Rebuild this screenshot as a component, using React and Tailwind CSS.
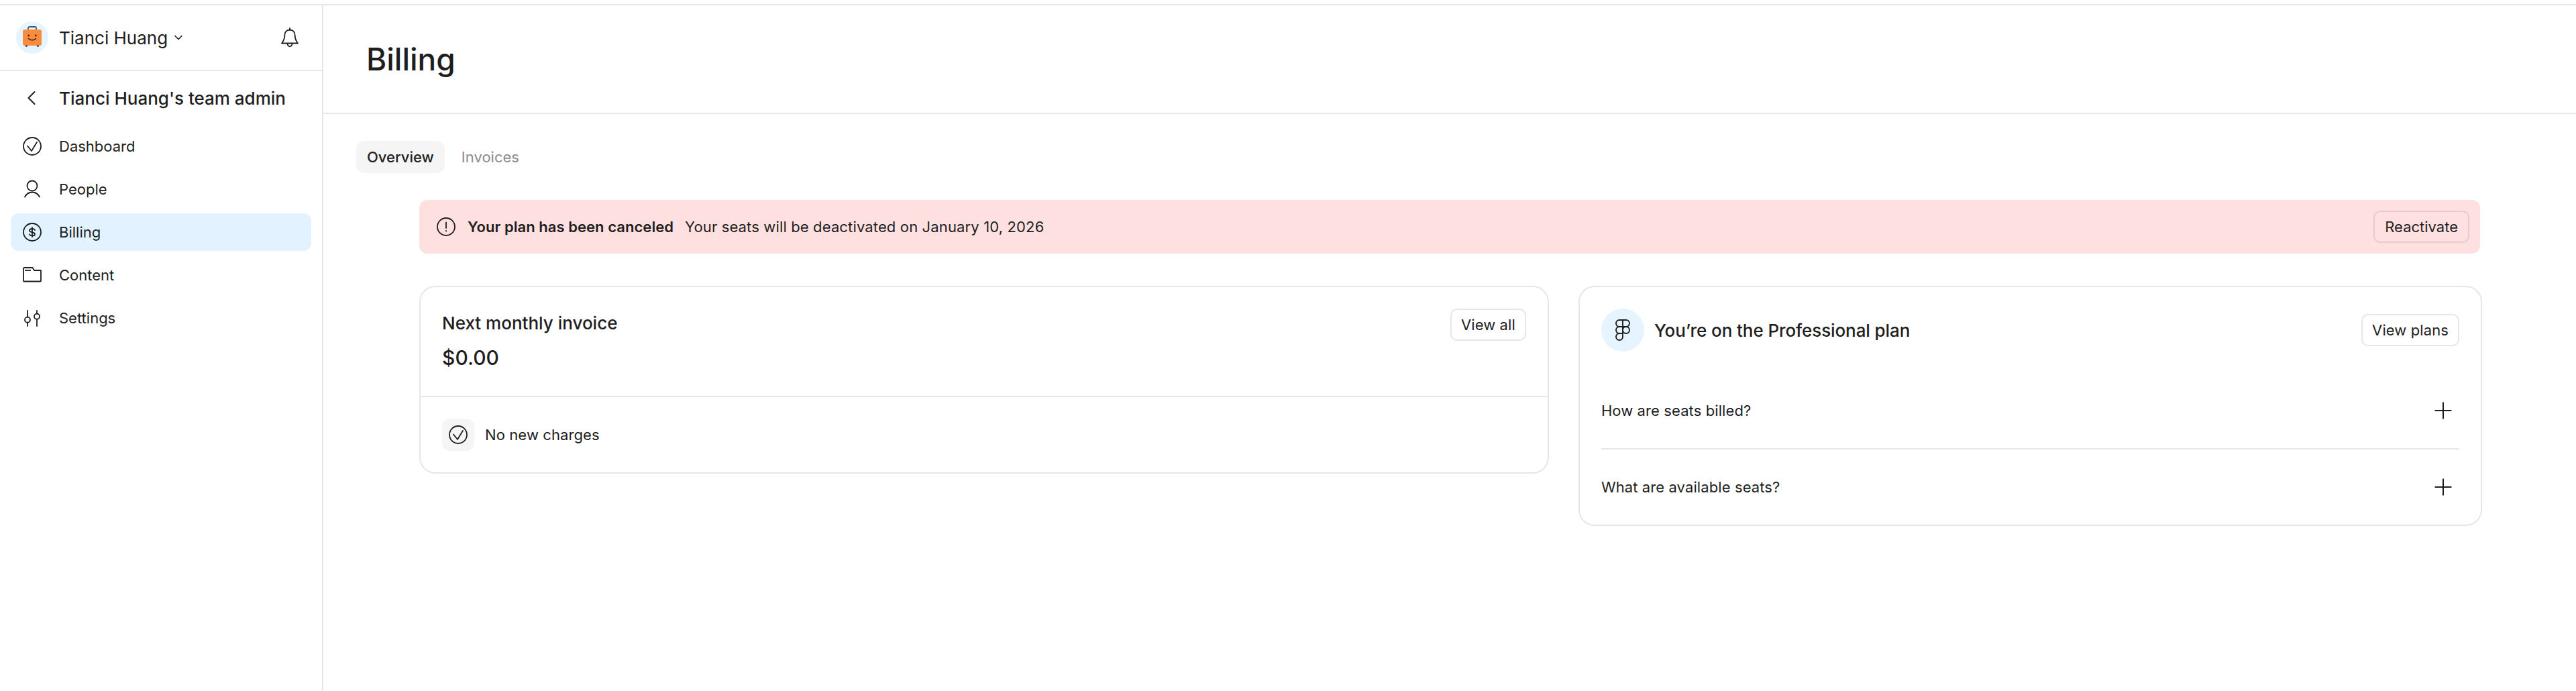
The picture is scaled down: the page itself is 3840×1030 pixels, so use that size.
import { ChevronDown, ChevronLeft, Plus } from "lucide-react";

const NAV_ITEMS = [
  { label: "Dashboard", icon: CheckCircle },
  { label: "People", icon: PersonIcon },
  { label: "Billing", icon: DollarIcon, active: true },
  { label: "Content", icon: FolderIcon },
  { label: "Settings", icon: SlidersIcon },
];

function CheckCircle({ className }) {
  return (
    <svg viewBox="0 0 28 28" fill="none" stroke="currentColor" strokeWidth="1.8" className={className}>
      <circle cx="14" cy="14" r="13" />
      <path d="M7 13.500L13 21L21 8" strokeLinecap="round" strokeLinejoin="round" />
    </svg>
  );
}

function PersonIcon({ className }) {
  return (
    <svg viewBox="0 0 28 28" fill="none" stroke="currentColor" strokeWidth="1.8" className={className}>
      <circle cx="14" cy="9" r="7.500" />
      <path d="M3 25.500C6 20 10 18.500 14 18.500S22 20 25 25.500" strokeLinecap="round" />
    </svg>
  );
}

function DollarIcon({ className }) {
  return (
    <svg viewBox="0 0 28 28" fill="none" stroke="currentColor" strokeWidth="1.8" className={className}>
      <circle cx="14" cy="14" r="13" />
      <path d="M18 11c-.5-1.200-2-2-4-2-2.300 0-4 1-4 2.600 0 3.800 8 1.600 8 5.300 0 1.600-1.700 2.600-4 2.600-2 0-3.500-.8-4-2.200M14 7v14" strokeLinecap="round" />
    </svg>
  );
}

function FolderIcon({ className }) {
  return (
    <svg viewBox="0 0 28 28" fill="none" stroke="currentColor" strokeWidth="1.8" className={className}>
      <path d="M1 4.500A1.500 1.500 0 0 1 2.500 3h12l2.500 4h9.500A.5.5 0 0 1 27 7.500v15a1 1 0 0 1-1 1H2a1 1 0 0 1-1-1z" strokeLinejoin="round" />
      <path d="M3 7h9" />
    </svg>
  );
}

function SlidersIcon({ className }) {
  return (
    <svg viewBox="0 0 28 28" fill="none" stroke="currentColor" strokeWidth="1.8" className={className}>
      <circle cx="7" cy="16.700" r="4" />
      <circle cx="21" cy="11.700" r="4" />
      <path d="M7 3v9.700M7 20.700V26M21 3v4.700M21 15.700V26" strokeLinecap="round" />
    </svg>
  );
}

function BellIcon({ className }) {
  return (
    <svg viewBox="0 0 26 30" fill="none" stroke="currentColor" strokeWidth="1.8" className={className}>
      <path d="M13 3.500c-5 0-7.700 3.600-7.700 8.500 0 6-2.500 9-4.300 11.500h24c-1.800-2.500-4.300-5.500-4.300-11.500 0-4.900-2.700-8.500-7.700-8.500z" strokeLinejoin="round" />
      <path d="M13 1v2.500M9.500 24c.3 2.800 1.700 4.300 3.500 4.300s3.200-1.500 3.500-4.300" strokeLinecap="round" />
    </svg>
  );
}

function AlertIcon({ className }) {
  return (
    <svg viewBox="0 0 28 28" fill="none" stroke="currentColor" strokeWidth="1.8" className={className}>
      <circle cx="14" cy="14" r="13" />
      <path d="M14 7.500v8.500M14 19.800v.7" strokeLinecap="round" />
    </svg>
  );
}

function FigmaIcon({ className }) {
  return (
    <svg viewBox="0 0 22 32" fill="none" stroke="currentColor" strokeWidth="1.900" className={className}>
      <path d="M11 1H6a5 5 0 0 0 0 10h5zM11 1h5a5 5 0 0 1 0 10h-5zM11 11H6a5 5 0 0 0 0 10h5zM11 21H6a5 5 0 1 0 5 5z" strokeLinejoin="round" />
      <circle cx="16" cy="16" r="5" />
    </svg>
  );
}

function SuitcaseAvatar() {
  return (
    <div className="flex h-12 w-12 shrink-0 items-center justify-center rounded-full bg-[#e5f4ff]">
      <svg viewBox="0 0 28 34" className="h-[34px] w-[28px]" fill="none">
        <path d="M8 6V3a2 2 0 0 1 2-2h8a2 2 0 0 1 2 2v3" stroke="#4a5568" strokeWidth="1.800" />
        <rect x="0" y="5" width="28" height="24" rx="3" fill="#fb8b3c" />
        <circle cx="5.500" cy="29.500" r="1.500" fill="#3f4650" />
        <circle cx="22.500" cy="29.500" r="1.500" fill="#3f4650" />
        <circle cx="8.700" cy="14" r="1.400" fill="#3a2a1e" />
        <circle cx="19.300" cy="14" r="1.400" fill="#3a2a1e" />
        <path d="M8.500 18.500c2.500 3 8.500 3 11 0" stroke="#3a2a1e" strokeWidth="1.500" strokeLinecap="round" />
      </svg>
    </div>
  );
}

function OutlineButton({ children, className = "" }) {
  return (
    <button className={`flex h-12 items-center rounded-[10px] border-2 text-[22px] ${className}`}>
      {children}
    </button>
  );
}

function Sidebar() {
  return (
    <aside className="flex w-[482px] shrink-0 flex-col border-r-2 border-[#e6e6e6]">
      <div className="flex h-[98px] shrink-0 items-center border-b-2 border-[#e6e6e6] pl-6 pr-[35px]">
        <SuitcaseAvatar />
        <span className="ml-4 text-[26px]">Tianci Huang</span>
        <ChevronDown size={20} strokeWidth={2} className="ml-[6px]" />
        <BellIcon className="ml-auto h-[30px] w-[26px]" />
      </div>
      <div className="flex h-[80px] shrink-0 items-center">
        <ChevronLeft size={36} strokeWidth={1.400} className="ml-[29px]" />
        <span className="ml-[23px] text-[26px] font-medium">Tianci Huang's team admin</span>
      </div>
      <nav className="flex flex-col gap-2 px-4 pt-1">
        {NAV_ITEMS.map(({ label, icon: Icon, active }) => (
          <a
            key={label}
            className={`flex h-14 items-center gap-[26px] rounded-xl px-[18px] text-[22px] ${active ? "bg-[#e2f2ff]" : ""}`}
          >
            <Icon className="h-7 w-7 shrink-0" />
            {label}
          </a>
        ))}
      </nav>
    </aside>
  );
}

function InvoiceCard() {
  return (
    <section className="self-start rounded-3xl border-2 border-[#e6e6e6]">
      <div className="flex h-[164px] items-start justify-between border-b-2 border-[#e6e6e6] p-8">
        <div>
          <h2 className="text-[26px] leading-[44px] font-medium">Next monthly invoice</h2>
          <p className="mt-[7px] text-[30px] leading-[44px] font-medium">$0.00</p>
        </div>
        <OutlineButton className="border-[#e6e6e6] px-[14px] tracking-[0.1px]">View all</OutlineButton>
      </div>
      <div className="flex items-center gap-4 p-8">
        <div className="flex h-12 w-12 items-center justify-center rounded-xl bg-[#f5f5f5]">
          <CheckCircle className="h-7 w-7" />
        </div>
        <span className="text-[22px] tracking-[0.1px]">No new charges</span>
      </div>
    </section>
  );
}

function PlanCard() {
  const questions = ["How are seats billed?", "What are available seats?"];
  return (
    <section className="rounded-3xl border-2 border-[#e6e6e6] px-8 pt-8">
      <div className="flex items-center justify-between">
        <div className="flex items-center gap-[15px]">
          <div className="flex h-16 w-16 items-center justify-center rounded-full bg-[#e5f4ff]">
            <FigmaIcon className="h-8 w-[22px]" />
          </div>
          <h2 className="text-[26px] font-medium tracking-[-0.1px]">You’re on the Professional plan</h2>
        </div>
        <OutlineButton className="border-[#e6e6e6] px-[14px] tracking-[0.1px]">View plans</OutlineButton>
      </div>
      <div className="mt-8">
        {questions.map((q, i) => (
          <div
            key={q}
            className={`flex items-center justify-between pr-1 text-[22px] tracking-[0.1px] ${i === 0 ? "h-[114px] border-b-2 border-[#e6e6e6]" : "h-[112px]"}`}
          >
            {q}
            <Plus size={40} strokeWidth={1.200} />
          </div>
        ))}
      </div>
    </section>
  );
}

export default function App() {
  return (
    <div className="flex h-screen flex-col bg-white pt-[6px] font-['Inter',sans-serif] text-[#1e1e1e]">
      <div className="flex min-h-0 flex-1 border-t-2 border-[#e6e6e6]">
        <Sidebar />
        <main className="min-w-0 flex-1">
          <header className="flex h-[162px] items-center border-b-2 border-[#e6e6e6] pl-[64px]">
            <h1 className="text-[46px] font-medium">Billing</h1>
          </header>
          <div className="pt-10 pl-[49px] pr-[140px]">
            <div className="flex gap-[9px]">
              <button className="h-12 rounded-xl bg-[#f5f5f5] px-4 text-[22px] font-medium">Overview</button>
              <button className="h-12 rounded-xl px-4 text-[22px] text-[#8c8c8c]">Invoices</button>
            </div>
            <div className="mt-10 ml-[94px]">
              <div className="mr-[3px] flex h-20 items-center rounded-xl bg-[#ffe0e0] pr-4 pl-[26px] text-[22px]">
                <AlertIcon className="h-7 w-7 shrink-0" />
                <strong className="ml-[18px] font-semibold tracking-[0.05px]">Your plan has been canceled</strong>
                <span className="ml-[17px] tracking-[0.14px]">Your seats will be deactivated on January 10, 2026</span>
                <OutlineButton className="ml-auto border-[#ecc8c8] px-[15px]">Reactivate</OutlineButton>
              </div>
              <div className="mt-12 grid grid-cols-[5fr_4fr] gap-11">
                <InvoiceCard />
                <PlanCard />
              </div>
            </div>
          </div>
        </main>
      </div>
    </div>
  );
}
